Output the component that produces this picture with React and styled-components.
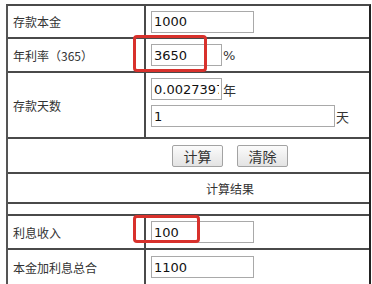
import React from "react";
import styled, { createGlobalStyle } from "styled-components";

const Global = createGlobalStyle`
  html, body { margin: 0; padding: 0; background: #fff; }
  body { width: 372px; height: 284px; overflow: hidden; }
`;

const Page = styled.div`
  padding: 4px 0 0 6px;
`;

const Table = styled.div`
  position: relative;
  width: 365px;
  box-sizing: border-box;
  border-top: 2px solid #4a4a4a;
  border-left: 2px solid #555;
  border-right: 2px solid #222;
  font-family: "Noto Sans CJK SC", "Noto Sans", sans-serif;
  font-size: 12px;
  color: #333;
`;

const Row = styled.div`
  display: grid;
  grid-template-columns: ${(p) => (p.$span ? "1fr" : "138px 1fr")};
  height: ${(p) => p.$h}px;
  box-sizing: border-box;
  border-bottom: 2px solid #4a4a4a;
`;

const Label = styled.div`
  display: flex;
  align-items: center;
  padding-left: 5px;
  border-right: 2px solid #4a4a4a;
  white-space: nowrap;
`;

const Field = styled.div`
  display: flex;
  flex-direction: ${(p) => (p.$stack ? "column" : "row")};
  align-items: ${(p) => (p.$stack ? "flex-start" : "center")};
  gap: ${(p) => (p.$stack ? "5px" : "0")};
  padding: ${(p) => (p.$stack ? "5px 0 0 5px" : "0 0 0 5px")};
`;

const Line = styled.div`
  display: flex;
  align-items: center;
`;

const Input = styled.input`
  box-sizing: border-box;
  width: ${(p) => p.$w}px;
  height: 22px;
  margin: 0;
  padding: 0 2px;
  border: 1px solid #a9a9a9;
  background: #fff;
  font-family: "DejaVu Sans", Verdana, sans-serif;
  font-size: 13px;
  color: #111;
  outline: none;
`;

const Unit = styled.span`
  font-size: ${(p) => (p.$latin ? "13px" : "13px")};
  font-family: ${(p) =>
    p.$latin ? '"DejaVu Sans", sans-serif' : '"Noto Sans CJK SC", sans-serif'};
  color: #333;
  padding-left: 1px;
`;

const Center = styled.div`
  display: flex;
  align-items: center;
  justify-content: center;
  gap: 14px;
  padding-left: 83px;
`;

const Button = styled.button`
  box-sizing: border-box;
  width: 51px;
  height: 22px;
  margin: 0;
  padding: 0;
  border: 1px solid #a3a3a3;
  border-radius: 2px;
  background: linear-gradient(#fbfbfb, #e3e3e3);
  font-family: "Noto Sans CJK SC", sans-serif;
  font-size: 14px;
  line-height: 20px;
  color: #333;
`;

const Mark = styled.div`
  position: absolute;
  left: ${(p) => p.$x}px;
  top: ${(p) => p.$y}px;
  width: ${(p) => p.$w}px;
  height: ${(p) => p.$h}px;
  box-sizing: border-box;
  border: 3px solid #d8312c;
  border-radius: 4px;
  pointer-events: none;
`;

export default function App() {
  return (
    <>
      <Global />
      <Page>
        <Table>
          <Row $h={33}>
            <Label>存款本金</Label>
            <Field>
              <Input $w={103} defaultValue="1000" />
            </Field>
          </Row>
          <Row $h={34}>
            <Label>年利率（365）</Label>
            <Field>
              <Input $w={71} defaultValue="3650" />
              <Unit $latin>%</Unit>
            </Field>
          </Row>
          <Row $h={66}>
            <Label>存款天数</Label>
            <Field $stack>
              <Line>
                <Input $w={71} defaultValue="0.0027397" />
                <Unit>年</Unit>
              </Line>
              <Line>
                <Input $w={184} defaultValue="1" />
                <Unit>天</Unit>
              </Line>
            </Field>
          </Row>
          <Row $h={35} $span>
            <Center>
              <Button>计算</Button>
              <Button>清除</Button>
            </Center>
          </Row>
          <Row $h={30} $span>
            <Center>计算结果</Center>
          </Row>
          <Row $h={12} $span />
          <Row $h={34}>
            <Label>利息收入</Label>
            <Field>
              <Input $w={103} defaultValue="100" />
            </Field>
          </Row>
          <Row $h={36}>
            <Label>本金加利息总合</Label>
            <Field>
              <Input $w={103} defaultValue="1100" />
            </Field>
          </Row>
          <Mark $x={125} $y={29} $w={74} $h={37} />
          <Mark $x={125} $y={209} $w={67} $h={28} />
        </Table>
      </Page>
    </>
  );
}
